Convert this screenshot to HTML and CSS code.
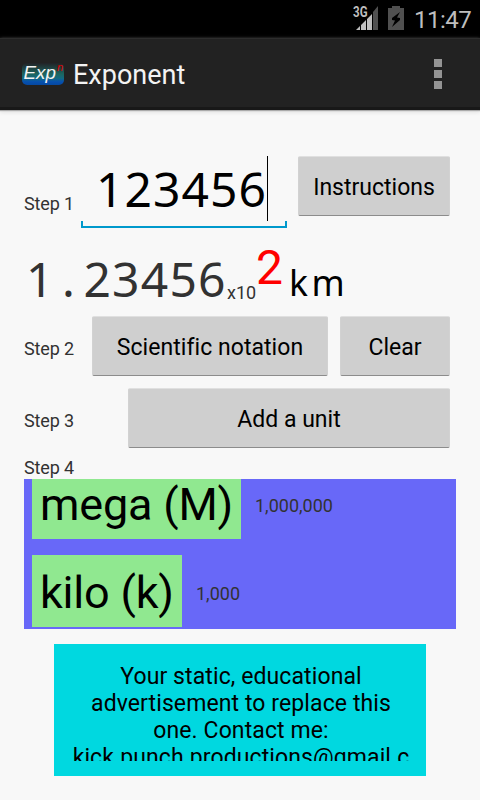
FILE: index.html
```html
<!DOCTYPE html>
<html lang="en">
<head>
    <meta charset="UTF-8">
    <meta name="viewport" content="width=device-width, initial-scale=1.0">
    <title>Exponent</title>
    <link rel="stylesheet" href="styles.css">
</head>
<body>
    <div class="status-bar">
        <svg class="signal" width="28" height="28" viewBox="0 0 28 28">
            <path d="M4 25L8 21V25Z M9 20L14 15V25H9Z M15 14L20 9V25H15Z" fill="#bebebe"/>
            <path d="M21 7L26 1V25H21Z" fill="#505050"/>
            <text x="1" y="12" textLength="14.500" lengthAdjust="spacingAndGlyphs">3G</text>
        </svg>
        <svg class="battery" width="16" height="24" viewBox="0 0 16 24">
            <path d="M4 0H12V2H16V24H0V2H4Z" fill="#505050"/>
            <path d="M12 6L4 12V14L7 14.500L4 21L12 14V12L9 11.500Z" fill="#000"/>
        </svg>
        <span class="clock">11:47</span>
    </div>
    <header>
        <svg class="logo" width="42" height="24" viewBox="0 0 42 24">
            <defs>
                <linearGradient id="logo-fill" x1="0" y1="0" x2="0" y2="1">
                    <stop offset="0" stop-color="#222226"/>
                    <stop offset="0.500" stop-color="#1c6660"/>
                    <stop offset="0.700" stop-color="#126a82"/>
                    <stop offset="0.850" stop-color="#0650b0"/>
                    <stop offset="1" stop-color="#0548a0"/>
                </linearGradient>
            </defs>
            <rect y="1" width="42" height="22" rx="5" fill="url(#logo-fill)"/>
            <text class="logo-exp" x="1.500" y="16.500" textLength="32.500" lengthAdjust="spacingAndGlyphs">Exp</text>
            <text class="logo-n" x="35" y="9">n</text>
        </svg>
        <h1>Exponent</h1>
        <div class="menu"><i></i><i></i><i></i></div>
    </header>
    <main>
        <div class="row row-input">
            <label>Step 1</label>
            <div class="number-input"><span>123456</span><i class="caret"></i></div>
            <button type="button" class="btn-instructions">Instructions</button>
        </div>
        <div class="result">
            <span class="mantissa">1<span class="dot">.</span>23456</span>
            <span class="times">x10</span>
            <span class="power">2</span>
            <span class="unit"><span>k</span><span>m</span></span>
        </div>
        <div class="row">
            <label>Step 2</label>
            <button type="button" class="btn-notation">Scientific notation</button>
            <button type="button" class="btn-clear">Clear</button>
        </div>
        <div class="row">
            <label>Step 3</label>
            <button type="button" class="btn-unit">Add a unit</button>
        </div>
        <label class="step-list">Step 4</label>
        <div class="prefixes">
            <div class="prefix prefix-mega">
                <span class="name">mega (M)</span>
                <span class="value">1,000,000</span>
            </div>
            <div class="prefix prefix-kilo">
                <span class="name">kilo (k)</span>
                <span class="value">1,000</span>
            </div>
        </div>
        <div class="ad">
            <p>Your static, educational<br>advertisement to replace this<br>one. Contact me:<br>kick.punch.productions@gmail.c</p>
        </div>
    </main>
</body>
</html>
```
FILE: styles.css
```css
* {
    box-sizing: border-box;
}
body {
    font-family: Roboto, sans-serif;
    margin: 0;
    height: 800px;
    overflow: hidden;
    background-color: #f8f8f8;
    color: #000;
}
.status-bar {
    height: 38px;
    background-color: #000;
    display: flex;
    justify-content: flex-end;
    padding-right: 9px;
}
.signal {
    margin: 5px 8px 0 0;
}
.signal text {
    font-size: 14.5px;
    font-weight: bold;
    fill: #bebebe;
    stroke: #000;
    stroke-width: 1.5px;
    paint-order: stroke;
}
.battery {
    margin: 6px 10px 0 0;
}
.clock {
    font-size: 24px;
    line-height: 40px;
    width: 57px;
    letter-spacing: -0.5px;
    white-space: nowrap;
    color: #bebebe;
}
header {
    height: 72px;
    background-color: #222;
    border-top: 1px solid #2d2d2d;
    border-bottom: 3px solid #181818;
    box-shadow: 0 1px 1px #aaa, 0 2px 4px #ddd;
    display: flex;
    align-items: center;
    padding: 2px 38px 0 22px;
}
.logo-exp {
    font-family: "Liberation Sans", sans-serif;
    font-size: 18px;
    font-style: italic;
    fill: #f3f3f3;
}
.logo-n {
    font-family: "Liberation Sans", sans-serif;
    font-size: 11px;
    font-style: italic;
    fill: #e00000;
}
header h1 {
    margin: 2px auto 0 9px;
    font-size: 27px;
    font-weight: normal;
    color: #f3f3f3;
}
.menu {
    display: grid;
    gap: 3px;
}
.menu i {
    width: 8px;
    height: 8px;
    background-color: #949494;
}
main {
    padding: 46px 24px 0;
}
label {
    font-size: 18px;
    line-height: 21px;
    letter-spacing: -0.15px;
    color: #323232;
    white-space: nowrap;
}
button {
    font-family: Roboto, sans-serif;
    font-size: 23px;
    height: 60px;
    padding: 3px 0 0;
    margin: 0 6px 0 0;
    background-color: #cfcfcf;
    color: #000;
    border: 1px solid #d2d2d2;
    border-top-color: #e0e0e0;
    border-bottom-color: #8c8c8c;
    border-radius: 2px;
    white-space: nowrap;
}
.row {
    display: flex;
    height: 60px;
    align-items: center;
    margin-bottom: 12px;
}
.row label {
    margin: 4px auto 0 0;
}
.row-input {
    height: 72px;
    align-items: flex-start;
    margin-bottom: 16px;
}
.row-input label {
    margin-top: 37px;
}
.number-input {
    display: flex;
    width: 206px;
    height: 72px;
    margin-right: 11px;
    padding-left: 15px;
    font-family: "Noto Sans", sans-serif;
    font-size: 48px;
    line-height: 66px;
    letter-spacing: 1.05px;
    background: linear-gradient(#0099cc, #0099cc) left bottom / 2px 7px no-repeat,
        linear-gradient(#0099cc, #0099cc) right bottom / 2px 7px no-repeat,
        linear-gradient(#0099cc, #0099cc) bottom / 100% 2px no-repeat;
}
.caret {
    width: 1px;
    height: 65px;
    background-color: #000;
}
.btn-instructions {
    width: 152px;
}
.btn-notation {
    width: 236px;
    margin-right: 12px;
    letter-spacing: 0.05px;
}
.btn-clear {
    width: 110px;
}
.btn-unit {
    width: 322px;
}
.result {
    display: flex;
    height: 72px;
    color: #323232;
    white-space: nowrap;
}
.mantissa {
    width: 203px;
    padding-left: 2px;
    font-family: "Noto Sans", sans-serif;
    font-size: 48px;
    line-height: 69px;
    letter-spacing: 1.2px;
}
.dot {
    display: inline-block;
    width: 28.8px;
    text-align: center;
}
.times {
    width: 29px;
    font-size: 18px;
    line-height: 98px;
}
.power {
    width: 33px;
    font-size: 48px;
    line-height: 48px;
    color: #f00;
}
.unit {
    display: flex;
    font-family: "Noto Sans", sans-serif;
    font-size: 35.5px;
    line-height: 77px;
    color: #000;
}
.unit span:first-child {
    width: 22.5px;
}
.step-list {
    display: block;
    margin-top: -3px;
}
.prefixes {
    height: 150px;
    margin-top: 1px;
    padding-left: 8px;
    background-color: #6868f8;
}
.prefix {
    display: flex;
}
.name {
    padding-left: 8px;
    font-size: 45px;
    letter-spacing: -0.2px;
    white-space: nowrap;
    background-color: #90e890;
}
.prefix-mega {
    height: 60px;
    margin-bottom: 16px;
    line-height: 52px;
}
.prefix-mega .name {
    width: 209px;
}
.prefix-kilo {
    height: 72px;
    line-height: 76px;
}
.prefix-kilo .name {
    width: 150px;
}
.value {
    margin: 1px 0 0 14px;
    font-size: 18px;
    color: #323232;
}
.ad {
    width: 372px;
    height: 132px;
    margin: 15px 0 0 30px;
    padding: 19px 11px 15px 13px;
    background-color: #00d8e0;
}
.ad p {
    height: 98px;
    margin: 0;
    overflow: hidden;
    font-size: 23px;
    line-height: 27px;
    letter-spacing: 0.1px;
    text-align: center;
    white-space: nowrap;
}
```
